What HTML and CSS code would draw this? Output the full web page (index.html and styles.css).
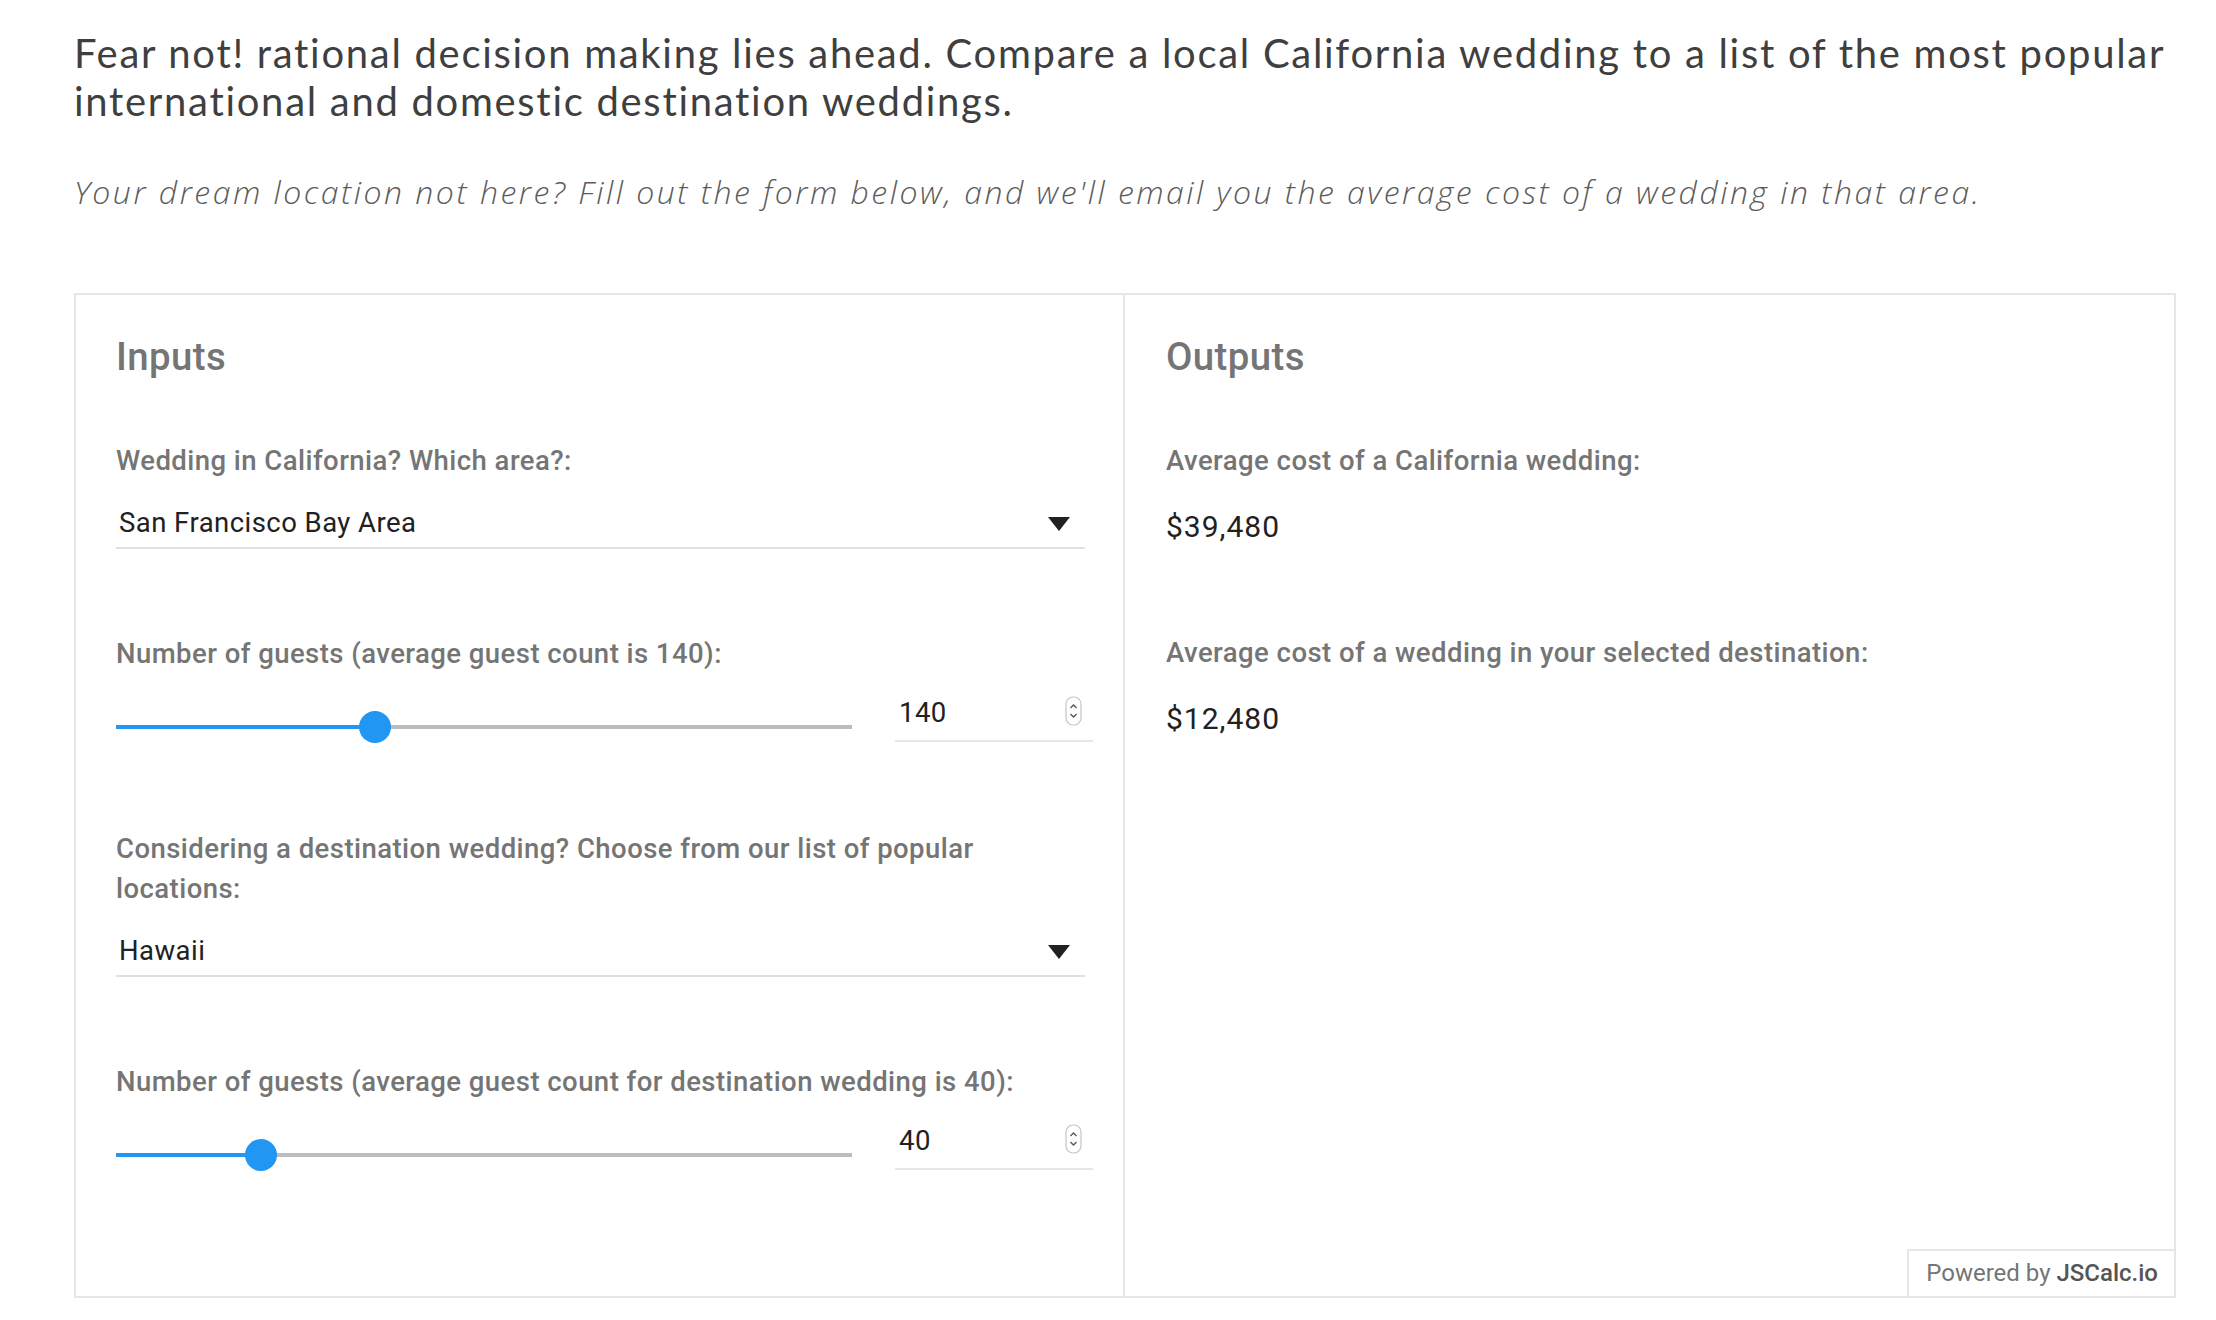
FILE: index.html
```html
<!DOCTYPE html>
<html lang="en">
<head>
<meta charset="utf-8">
<title>California vs Destination Wedding Cost</title>
<link rel="stylesheet" href="styles.css">
</head>
<body>
<div class="page">
  <h1 class="intro">Fear not! rational decision making lies ahead. Compare a local California wedding to a list of the most popular international and domestic destination weddings.</h1>
  <p class="note">Your dream location not here? Fill out the form below, and we'll email you the average cost of a wedding in that area.</p>

  <div class="calc">
    <section class="col col-inputs">
      <h2 class="col-title">Inputs</h2>

      <div class="field">
        <div class="label">Wedding in California? Which area?:</div>
        <div class="select">
          <span class="select-value">San Francisco Bay Area</span>
          <svg class="caret" width="22" height="14" viewBox="0 0 22 14"><path d="M0 0H22L11 14Z" fill="#212121"/></svg>
        </div>
      </div>

      <div class="field">
        <div class="label">Number of guests (average guest count is 140):</div>
        <div class="slider-row">
          <div class="slider">
            <div class="track">
              <div class="fill" style="width: 35.2%"></div>
              <div class="thumb" style="left: 35.2%"></div>
            </div>
          </div>
          <div class="number">
            <span class="number-value">140</span>
            <svg class="spin" width="17" height="30" viewBox="0 0 17 30"><rect x="1" y="1" width="15" height="28" rx="7" fill="#fff" stroke="#c4c4c4" stroke-width="1.2"/><path d="M5.5 12L8.5 9L11.5 12" fill="none" stroke="#555" stroke-width="1.3"/><path d="M5.5 18L8.5 21L11.5 18" fill="none" stroke="#555" stroke-width="1.3"/></svg>
          </div>
        </div>
      </div>

      <div class="field">
        <div class="label">Considering a destination wedding? Choose from our list of popular locations:</div>
        <div class="select">
          <span class="select-value">Hawaii</span>
          <svg class="caret" width="22" height="14" viewBox="0 0 22 14"><path d="M0 0H22L11 14Z" fill="#212121"/></svg>
        </div>
      </div>

      <div class="field">
        <div class="label">Number of guests (average guest count for destination wedding is 40):</div>
        <div class="slider-row">
          <div class="slider">
            <div class="track">
              <div class="fill" style="width: 19.7%"></div>
              <div class="thumb" style="left: 19.7%"></div>
            </div>
          </div>
          <div class="number">
            <span class="number-value">40</span>
            <svg class="spin" width="17" height="30" viewBox="0 0 17 30"><rect x="1" y="1" width="15" height="28" rx="7" fill="#fff" stroke="#c4c4c4" stroke-width="1.2"/><path d="M5.5 12L8.5 9L11.5 12" fill="none" stroke="#555" stroke-width="1.3"/><path d="M5.5 18L8.5 21L11.5 18" fill="none" stroke="#555" stroke-width="1.3"/></svg>
          </div>
        </div>
      </div>
    </section>

    <section class="col col-outputs">
      <h2 class="col-title">Outputs</h2>
      <div class="output">
        <div class="label">Average cost of a California wedding:</div>
        <div class="value">$39,480</div>
      </div>
      <div class="output">
        <div class="label">Average cost of a wedding in your selected destination:</div>
        <div class="value">$12,480</div>
      </div>
    </section>

    <div class="powered">Powered by <strong>JSCalc.io</strong></div>
  </div>
</div>
</body>
</html>
```

FILE: styles.css
```css
* { box-sizing: border-box; }

html, body {
  margin: 0;
  padding: 0;
  background: #ffffff;
}

body {
  font-family: Roboto, "Liberation Sans", sans-serif;
}

.page {
  padding-left: 74px;
  width: 2176px;
}

.intro {
  margin: 29px 0 0 0;
  font-family: Lato, "Liberation Sans", sans-serif;
  font-weight: 400;
  font-size: 40px;
  line-height: 48px;
  color: #3f3f3f;
  letter-spacing: 1.7px;
}

.note {
  margin: 46px 0 0 0;
  font-family: "Open Sans", "Liberation Sans", sans-serif;
  font-style: italic;
  font-weight: 300;
  font-size: 32px;
  line-height: 42px;
  letter-spacing: 2.5px;
  color: #5c5c5c;
}

.calc {
  position: relative;
  margin-top: 80px;
  display: grid;
  grid-template-columns: 1fr 1fr;
  border: 2px solid #e6e6e6;
  width: 2102px;
}

.col {
  padding-top: 39px;
}

.col-inputs {
  border-right: 2px solid #e6e6e6;
  padding-left: 40px;
  padding-right: 38px;
  padding-bottom: 124px;
}

.col-outputs {
  padding-left: 41px;
  padding-right: 40px;
}

.col-title {
  margin: 0;
  font-size: 38.4px;
  line-height: 46px;
  font-weight: 500;
  letter-spacing: 0.4px;
  color: #757575;
}

.label {
  font-size: 27.5px;
  line-height: 40px;
  font-weight: 500;
  letter-spacing: 0.45px;
  color: #757575;
}

.field {
  margin-top: 85px;
}

.col-title + .field {
  margin-top: 61px;
}

.select {
  margin-top: 22px;
  display: flex;
  align-items: center;
  justify-content: space-between;
  height: 46px;
  padding: 0 15px 4px 3px;
  border-bottom: 2px solid #e0e0e0;
}

.select-value {
  font-size: 27.5px;
  line-height: 40px;
  letter-spacing: 0.45px;
  color: #212121;
}

.caret {
  display: block;
  margin-top: 1px;
}

.slider-row {
  margin-top: 19px;
  display: flex;
  align-items: flex-start;
  gap: 43px;
  height: 51px;
  margin-right: -8px;
}

.slider {
  flex: 1;
  padding-top: 32px;
}

.track {
  position: relative;
  height: 4px;
  background: #bdbdbd;
}

.fill {
  height: 4px;
  background: #2196f3;
}

.thumb {
  position: absolute;
  top: 50%;
  width: 32px;
  height: 32px;
  margin: -16px 0 0 -16px;
  border-radius: 50%;
  background: #2196f3;
}

.number {
  width: 198px;
  height: 49px;
  display: flex;
  align-items: flex-start;
  justify-content: space-between;
  padding: 0 11px 0 4px;
  border-bottom: 2px solid #e6e6e6;
}

.number-value {
  font-size: 27.5px;
  line-height: 40px;
  letter-spacing: 0.45px;
  color: #212121;
}

.spin {
  display: block;
  margin-top: 3px;
}

.output {
  margin-top: 86px;
}

.col-title + .output {
  margin-top: 61px;
}

.value {
  margin-top: 26px;
  font-size: 30px;
  line-height: 40px;
  letter-spacing: 1px;
  color: #212121;
}

.powered {
  position: absolute;
  right: 0;
  bottom: 0;
  height: 47px;
  padding: 0 16px 0 17px;
  border-top: 2px solid #e6e6e6;
  border-left: 2px solid #e6e6e6;
  font-size: 24px;
  line-height: 44px;
  color: #757575;
  background: #ffffff;
}

.powered strong {
  font-weight: 500;
  color: #555555;
}
```
